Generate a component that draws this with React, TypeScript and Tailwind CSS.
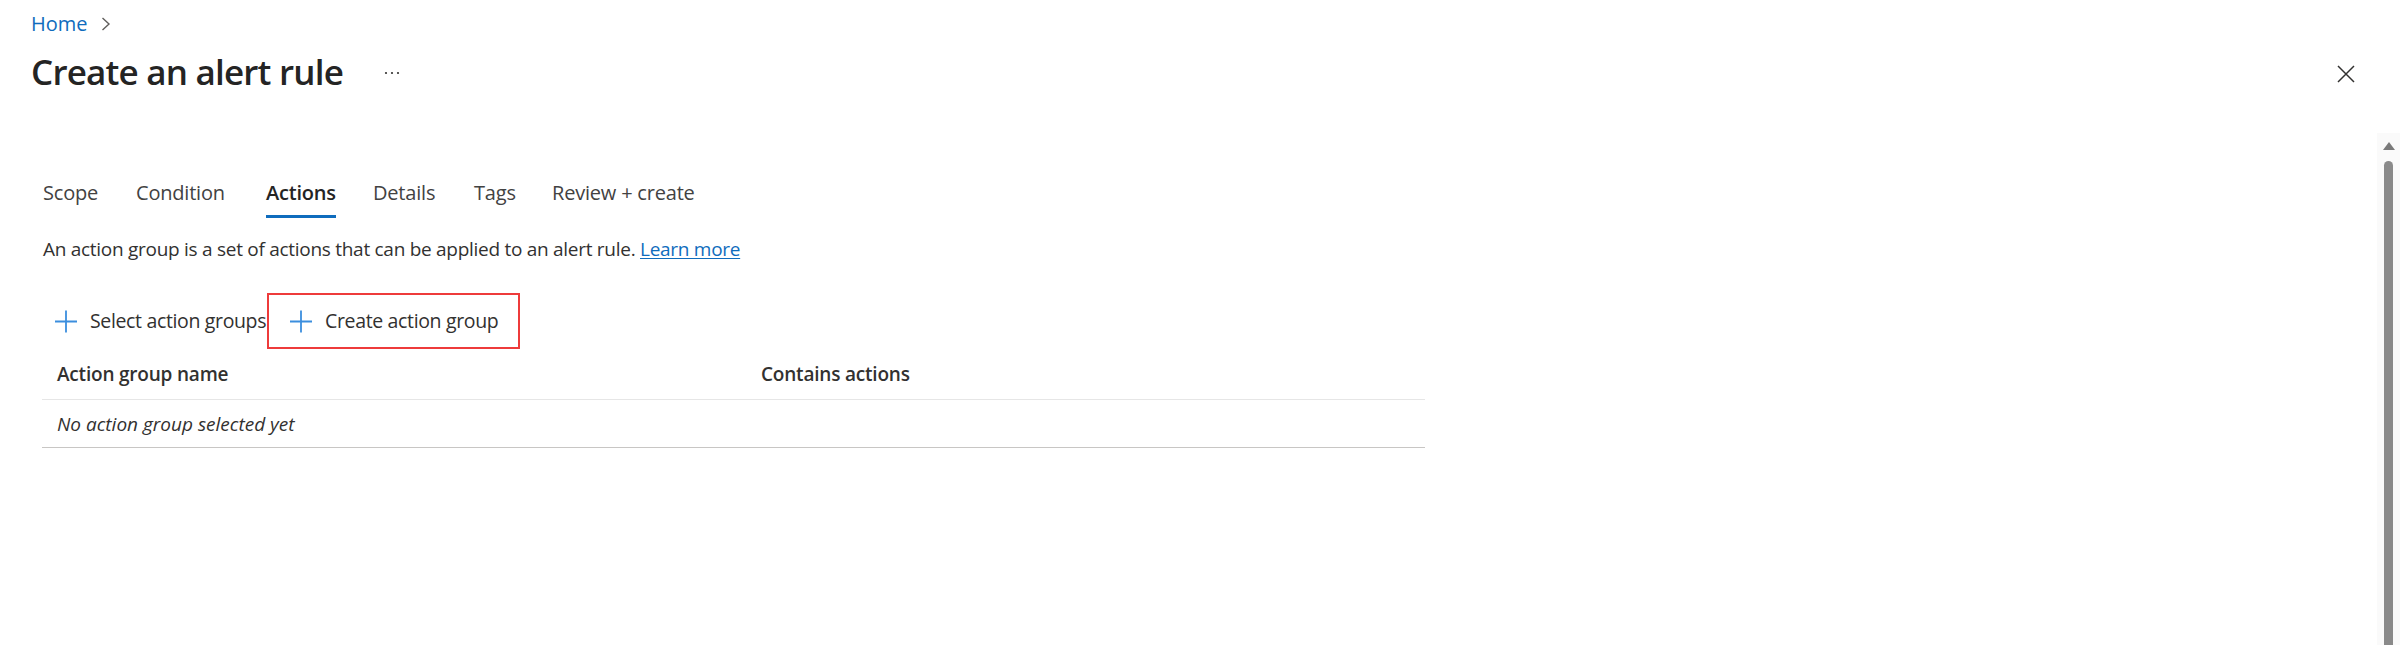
import React from 'react';

const tabs = [
  { label: 'Scope', width: 'w-[93px]' },
  { label: 'Condition', width: 'w-[130px]' },
  { label: 'Actions', width: 'w-[107px]', active: true },
  { label: 'Details', width: 'w-[101px]' },
  { label: 'Tags', width: 'w-[78px]' },
  { label: 'Review + create', width: 'w-[160px]' },
];

const PlusIcon: React.FC = () => (
  <svg width="22" height="23" viewBox="0 0 22 23" className="shrink-0">
    <path d="M11 0.5V22.5M0 11.5H22" stroke="#3b8ede" strokeWidth="1.8" fill="none" />
  </svg>
);

export default function App() {
  return (
    <div className="h-[645px] w-[2400px] overflow-hidden bg-white text-[#323130] font-['Segoe_UI','Open_Sans',sans-serif] flex flex-col">
      {/* header */}
      <div className="h-[133px] shrink-0 flex justify-between">
        <div className="pl-[31px]">
          <div className="pt-[10px] flex items-center h-[38px] text-[20px] leading-[28px]">
            <span className="text-[#0f6cbd]">Home</span>
            <svg width="10" height="14" viewBox="0 0 10 14" className="ml-[13px]">
              <path d="M1.5 1L8 7L1.5 13" stroke="#605e5c" strokeWidth="1.4" fill="none" />
            </svg>
          </div>
          <div className="mt-[12px] flex items-center">
            <h1 className="text-[35px] leading-[44px] font-semibold tracking-[-0.8px] text-[#242424]">Create an alert rule</h1>
            <svg width="16" height="4" viewBox="0 0 16 4" className="ml-[41px] mt-[2px]">
              <circle cx="2" cy="2" r="1.1" fill="#323130" />
              <circle cx="8" cy="2" r="1.1" fill="#323130" />
              <circle cx="14" cy="2" r="1.1" fill="#323130" />
            </svg>
          </div>
        </div>
        <div className="pt-[65px] pr-[45px]">
          <svg width="18" height="18" viewBox="0 0 18 18">
            <path d="M1 1L17 17M17 1L1 17" stroke="#323130" strokeWidth="1.5" fill="none" />
          </svg>
        </div>
      </div>

      {/* body */}
      <div className="flex-1 flex">
        <div className="flex-1 pl-[42px]">
          <div className="pt-[46px] pl-[1px] flex">
            {tabs.map((t) => (
              <div key={t.label} className={`${t.width} shrink-0`}>
                <span
                  className={`inline-block text-[20px] leading-[28px] tracking-[-0.2px] pb-[8px] border-b-[3px] ${
                    t.active ? 'font-semibold text-[#242424] border-[#0f6cbd]' : 'text-[#424242] border-transparent'
                  }`}
                >
                  {t.label}
                </span>
              </div>
            ))}
          </div>

          <p className="mt-[17px] pl-[1px] text-[19px] leading-[28px] tracking-[-0.28px] text-[#323130]">
            An action group is a set of actions that can be applied to an alert rule.{' '}
            <a className="text-[#0f6cbd] underline underline-offset-2">Learn more</a>
          </p>

          <div className="mt-[30px] flex items-center">
            <button className="w-[225px] flex items-center gap-[13px] pl-[13px] text-[19.5px] leading-[28px] tracking-[-0.35px] text-[#323130] whitespace-nowrap">
              <PlusIcon />
              Select action groups
            </button>
            <button className="w-[253px] h-[56px] border-[2.5px] border-[#ee3b3b] flex items-center gap-[13px] pl-[21px] text-[19.5px] leading-[28px] tracking-[-0.35px] text-[#323130] whitespace-nowrap">
              <PlusIcon />
              Create action group
            </button>
          </div>

          <div className="w-[1383px]">
            <div className="grid grid-cols-[719px_1fr] h-[51px] items-center border-b border-[#e6e6e6] text-[19px] leading-[28px] tracking-[-0.2px] font-semibold text-[#323130]">
              <div className="pl-[15px]">Action group name</div>
              <div>Contains actions</div>
            </div>
            <div className="h-[48px] flex items-center border-b border-[#c8c6c4] pl-[15px] text-[19px] leading-[28px] italic text-[#323130]">
              No action group selected yet
            </div>
          </div>
        </div>

        {/* scrollbar */}
        <div className="w-[23px] shrink-0 bg-[#fafafa] flex flex-col items-center pt-[9px]">
          <svg width="12" height="8" viewBox="0 0 12 8">
            <path d="M6 0L12 8H0Z" fill="#7a7a7a" />
          </svg>
          <div className="mt-[11px] w-[9px] flex-1 rounded-t-full bg-[#8a8a8a]" />
        </div>
      </div>
    </div>
  );
}
